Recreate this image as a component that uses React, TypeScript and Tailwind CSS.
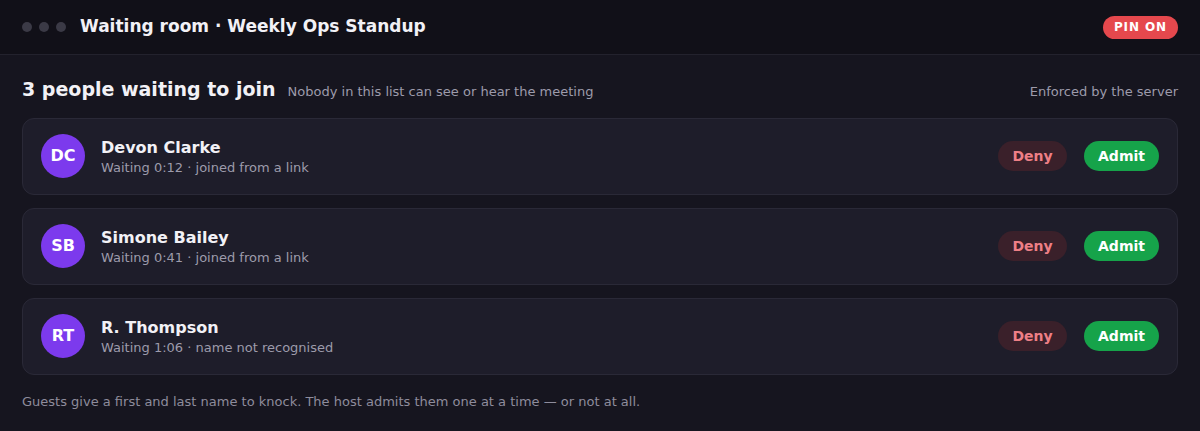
import React from "react";

type Guest = {
    initials: string;
    name: string;
    detail: string;
};

const guests: Guest[] = [
    { initials: "DC", name: "Devon Clarke", detail: "Waiting 0:12 · joined from a link" },
    { initials: "SB", name: "Simone Bailey", detail: "Waiting 0:41 · joined from a link" },
    { initials: "RT", name: "R. Thompson", detail: "Waiting 1:06 · name not recognised" },
];

function GuestRow({ guest }: { guest: Guest }) {
    return (
        <div className="flex items-center h-[77px] px-[18px] rounded-[12px] bg-[#1e1d2a] border border-[#2a2937]">
            <div className="flex items-center justify-center w-[44px] h-[44px] rounded-full bg-[#7c3aed] text-white text-[16px] font-bold">
                {guest.initials}
            </div>
            <div className="ml-[16px] mt-[3px] flex flex-col">
                <span className="text-[16px] font-bold text-[#f2f1f6] leading-[20px]">{guest.name}</span>
                <span className="text-[13px] text-[#9d9bab] leading-[19px]">{guest.detail}</span>
            </div>
            <div className="ml-auto flex items-center gap-[17px]">
                <button className="h-[30px] w-[69px] rounded-full bg-[#3a202a] text-[#ee7f86] text-[14px] font-bold">
                    Deny
                </button>
                <button className="h-[30px] w-[75px] rounded-full bg-[#16a34a] text-white text-[14px] font-bold">
                    Admit
                </button>
            </div>
        </div>
    );
}

export default function App() {
    return (
        <div
            className="w-[1200px] h-[431px] bg-[#16151f] overflow-hidden"
            style={{ fontFamily: '"DejaVu Sans", sans-serif' }}
        >
            {/* Title bar */}
            <div className="flex items-center h-[55px] px-[22px] bg-[#111018] border-b border-[#23222d]">
                <div className="flex items-center gap-[7px]">
                    <span className="w-[10px] h-[10px] rounded-full bg-[#3b3a46]" />
                    <span className="w-[10px] h-[10px] rounded-full bg-[#3b3a46]" />
                    <span className="w-[10px] h-[10px] rounded-full bg-[#3b3a46]" />
                </div>
                <h1 className="ml-[14px] text-[17px] font-bold text-[#f2f1f6]">
                    Waiting room · Weekly Ops Standup
                </h1>
                <span className="ml-auto h-[23px] px-[11px] flex items-center rounded-full bg-[#e5484d] text-white text-[12px] font-bold tracking-[0.9px]">
                    PIN ON
                </span>
            </div>

            {/* Body */}
            <div className="px-[22px] pt-[20px]">
                <div className="flex items-baseline">
                    <h2 className="text-[19px] font-bold text-[#f2f1f6]">3 people waiting to join</h2>
                    <span className="ml-[12px] text-[13px] text-[#9d9bab]">
                        Nobody in this list can see or hear the meeting
                    </span>
                    <span className="ml-auto text-[13px] text-[#9d9bab]">Enforced by the server</span>
                </div>

                <div className="mt-[14px] flex flex-col gap-[13px]">
                    {guests.map((g) => (
                        <GuestRow key={g.initials} guest={g} />
                    ))}
                </div>

                <p className="mt-[17px] text-[13px] text-[#8e8c9c]">
                    Guests give a first and last name to knock. The host admits them one at a time — or not at all.
                </p>
            </div>
        </div>
    );
}
